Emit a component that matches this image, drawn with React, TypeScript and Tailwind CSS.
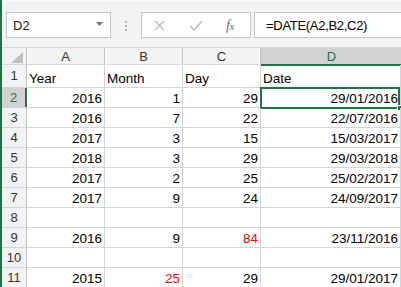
import React from "react";

type Cell = { v: string; red?: boolean };
const rows: (Cell[] | null)[] = [
  [{ v: "2016" }, { v: "1" }, { v: "29" }, { v: "29/01/2016" }],
  [{ v: "2016" }, { v: "7" }, { v: "22" }, { v: "22/07/2016" }],
  [{ v: "2017" }, { v: "3" }, { v: "15" }, { v: "15/03/2017" }],
  [{ v: "2018" }, { v: "3" }, { v: "29" }, { v: "29/03/2018" }],
  [{ v: "2017" }, { v: "2" }, { v: "25" }, { v: "25/02/2017" }],
  [{ v: "2017" }, { v: "9" }, { v: "24" }, { v: "24/09/2017" }],
  null,
  [{ v: "2016" }, { v: "9" }, { v: "84", red: true }, { v: "23/11/2016" }],
  null,
  [{ v: "2015" }, { v: "25", red: true }, { v: "29" }, { v: "29/01/2017" }],
];

function DataCell({ c, wide, children }: { c?: Cell; wide?: boolean; children?: React.ReactNode }) {
  return (
    <div
      className={`relative h-full shrink-0 border-r border-[#d4d4d4] flex items-end justify-end px-[2px] pb-[1px] text-[13.5px] leading-[15px] ${
        wide ? "w-[140px]" : "w-[78px]"
      } ${c?.red ? "text-[#ff0000]" : "text-black"}`}
    >
      {c?.v}
      {children}
    </div>
  );
}

export default function App() {
  return (
    <div className="w-[401px] h-[287px] overflow-hidden flex bg-white font-['Liberation_Sans',Arial,sans-serif]">
      <div className="w-[2px] shrink-0 bg-[#217346]" />
      <div className="flex-1 min-w-0 flex flex-col">
        {/* toolbar */}
        <div className="h-[47px] shrink-0 bg-[#f3f3f3] border-t border-[#fbfbfb] flex items-start pt-[11px]">
          <div className="ml-[4px] w-[105px] h-[26px] bg-white border border-[#c6c6c6] flex items-center pl-[6px] pr-[7px]">
            <span className="text-[13px] text-[#222] flex-1 pt-[1px]">D2</span>
            <svg width="7" height="4" viewBox="0 0 7 4" className="mb-[2px]">
              <path d="M0 0 H7 L3.5 4 Z" fill="#777" />
            </svg>
          </div>
          <div className="w-[30px] h-[26px] flex flex-col items-center justify-center gap-[2px] pt-[1px]">
            <span className="w-[2px] h-[2px] bg-[#b0b0b0]" />
            <span className="w-[2px] h-[2px] bg-[#b0b0b0]" />
            <span className="w-[2px] h-[2px] bg-[#b0b0b0]" />
          </div>
          <div className="w-[110px] h-[26px] bg-white border border-[#c6c6c6] flex items-center pl-[12px]">
            <svg width="11" height="11" viewBox="0 0 11 11">
              <path d="M1 1 L10 10 M10 1 L1 10" stroke="#bdbdbd" strokeWidth="1.4" />
            </svg>
            <svg width="14" height="11" viewBox="0 0 14 11" className="ml-[24px]">
              <path d="M1 6 L5 10 L13 1" stroke="#bdbdbd" strokeWidth="1.6" fill="none" />
            </svg>
            <span className="ml-[23px] font-['Liberation_Serif',serif] italic text-[14px] text-[#6e6e6e] tracking-[-0.5px]">
              f<span className="text-[11px]">x</span>
            </span>
          </div>
          <div className="ml-[3px] flex-1 -mr-[4px] h-[26px] bg-white border border-[#c6c6c6] flex items-center pl-[11px]">
            <span className="text-[13px] tracking-[-0.3px] text-black pt-[1px]">=DATE(A2,B2,C2)</span>
          </div>
        </div>

        {/* column headers */}
        <div className="h-[18px] shrink-0 flex bg-[#f3f3f3] border-t border-[#d8d8d8] border-b border-[#bfbfbf] text-[13px] text-[#333]">
          <div className="relative w-[25px] shrink-0 h-full border-r border-[#c6c6c6]">
            <svg width="12" height="11" viewBox="0 0 12 11" className="absolute left-[9px] top-[4px]">
              <path d="M12 0 L12 11 L0 11 Z" fill="#bfbfbf" />
            </svg>
          </div>
          {["A", "B", "C"].map((h) => (
            <div key={h} className="w-[78px] shrink-0 h-full border-r border-[#c6c6c6] flex items-center justify-center pt-[2px]">
              {h}
            </div>
          ))}
          <div className="w-[141px] shrink-0 h-[18px] bg-[#d2d2d2] border-b-2 border-[#217346] flex items-center justify-center pt-[2px] text-[#217346]">
            D
          </div>
        </div>

        {/* row 1 */}
        <div className="h-[23px] shrink-0 flex border-b border-[#d4d4d4]">
          <div className="w-[25px] shrink-0 h-full bg-[#f3f3f3] border-r border-[#c6c6c6] flex items-center justify-center text-[13px] text-[#333]">
            1
          </div>
          {["Year", "Month", "Day"].map((t) => (
            <div key={t} className="w-[78px] shrink-0 h-full border-r border-[#d4d4d4] flex items-end px-[2px] pb-[1px] text-[13.5px] leading-[15px] text-black">
              {t}
            </div>
          ))}
          <div className="w-[140px] shrink-0 h-full border-r border-[#d4d4d4] flex items-end px-[2px] pb-[1px] text-[13.5px] leading-[15px] text-black">
            Date
          </div>
        </div>

        {rows.map((r, i) => {
          const n = i + 2;
          const sel = n === 2;
          return (
            <div key={n} className="h-[20px] shrink-0 flex border-b border-[#d4d4d4]">
              <div
                className={`w-[25px] shrink-0 h-full flex items-center justify-center text-[13px] ${
                  sel
                    ? "bg-[#d2d2d2] border-r-2 border-[#217346] text-[#217346]"
                    : "bg-[#f3f3f3] border-r border-[#c6c6c6] text-[#333]"
                }`}
              >
                {n}
              </div>
              <DataCell c={r?.[0]} />
              <DataCell c={r?.[1]} />
              <DataCell c={r?.[2]} />
              <DataCell c={r?.[3]} wide>
                {sel && (
                  <>
                    <div className="absolute -left-[1px] -top-[1px] w-[140px] h-[22px] border-2 border-[#217346] pointer-events-none" />
                    <div className="absolute -right-[3px] -bottom-[4px] w-[6px] h-[6px] bg-[#217346] border border-white" />
                  </>
                )}
              </DataCell>
            </div>
          );
        })}
      </div>
    </div>
  );
}
